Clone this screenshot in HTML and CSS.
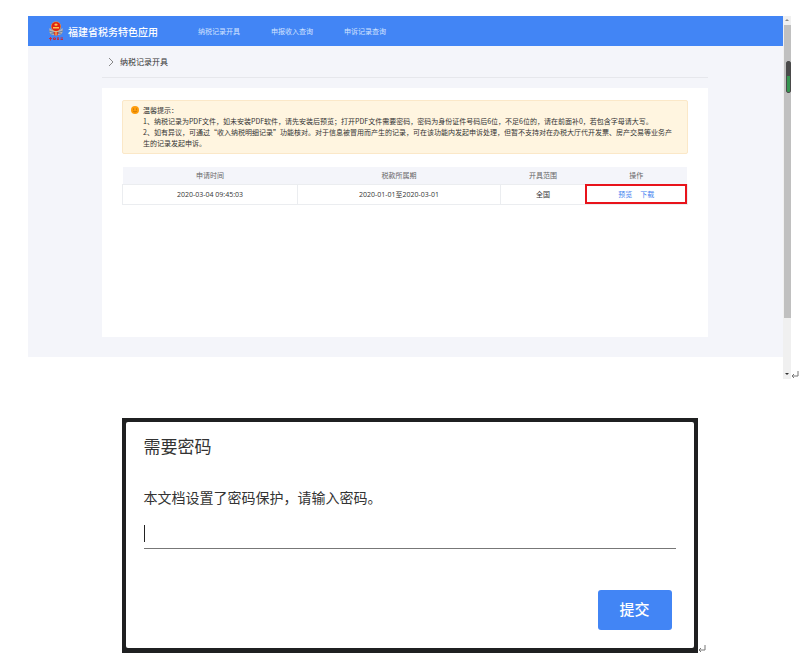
FILE: index.html
```html
<!DOCTYPE html>
<html lang="zh-CN">
<head>
  <meta charset="UTF-8">
  <meta name="viewport" content="width=device-width, initial-scale=1.0">
  <title>福建省税务特色应用</title>
  <link rel="stylesheet" href="styles.css">
</head>
<body>
  <div class="screen">
    <div class="page">
      <header class="header">
        <svg class="logo" viewBox="0 0 32 40" aria-hidden="true">
          <path d="M3 14 Q1 26 9 28 L23 28 Q31 26 29 14 L24 18 L8 18 Z" fill="#b9b4b5"/>
          <path d="M2 20 L12 23 M30 20 L20 23 M5 26 L13 25 M27 26 L19 25" stroke="#66809f" stroke-width="2"/>
          <circle cx="16" cy="11" r="10" fill="#e8a04c"/>
          <circle cx="16" cy="11" r="9" fill="#dc2415"/>
          <path d="M16 3 L17 6 L20 6 L18 8 L19 10 L16 9 L13 10 L14 8 L12 6 L15 6 Z M10 12 H22 V15 H10 Z" fill="#ffc04d"/>
          <path d="M11 22 H21 L19 29 H13 Z" fill="#dc3a23"/>
          <path d="M16 20 V29" stroke="#ffd06a" stroke-width="2"/>
          <path d="M2 35 H8 M5 32 V39 M11 34 H15 V37 H11 Z M18 34 H22 M18 37 H22 M20 33 V38 M25 34 H30 M25 37 H30" fill="none" stroke="#c52b43" stroke-width="2"/>
        </svg>
        <div class="brand">福建省税务特色应用</div>
        <nav class="nav">
          <a href="#">纳税记录开具</a>
          <a href="#">申报收入查询</a>
          <a href="#">申诉记录查询</a>
        </nav>
      </header>
      <main class="main">
        <div class="breadcrumb">
          <svg class="chevron" viewBox="0 0 6 8" aria-hidden="true"><path d="M1 0 L5 4 L1 8" fill="none" stroke="#888" stroke-width="1"/></svg>
          纳税记录开具
        </div>
        <div class="card">
          <div class="notice">
            <svg class="smile" viewBox="0 0 16 16" aria-hidden="true">
              <circle cx="8" cy="8" r="8" fill="#ff9c0a"/>
              <circle cx="5" cy="6" r="1" fill="#9b5a00"/>
              <circle cx="11" cy="6" r="1" fill="#9b5a00"/>
              <path d="M4 10 Q8 14 12 10" fill="none" stroke="#9b5a00" stroke-width="1"/>
            </svg>
            <div class="notice-text">
              <div>温馨提示：</div>
              <div>1、纳税记录为PDF文件，如未安装PDF软件，请先安装后预览；打开PDF文件需要密码，密码为身份证件号码后6位，不足6位的，请在前面补0，若包含字母请大写。</div>
              <div>2、如有异议，可通过“收入纳税明细记录”功能核对。对于信息被冒用而产生的记录，可在该功能内发起申诉处理，但暂不支持对在办税大厅代开发票、房产交易等业务产生的记录发起申诉。</div>
            </div>
          </div>
          <table class="records">
            <thead>
              <tr>
                <th class="col-time">申请时间</th>
                <th class="col-period">税款所属期</th>
                <th class="col-range">开具范围</th>
                <th class="col-action">操作</th>
              </tr>
            </thead>
            <tbody>
              <tr>
                <td>2020-03-04 09:45:03</td>
                <td>2020-01-01至2020-03-01</td>
                <td>全国</td>
                <td class="actions"><a href="#">预览</a><a href="#">下载</a></td>
              </tr>
            </tbody>
          </table>
        </div>
      </main>
    </div>
    <div class="scrollbar">
      <div class="arrow up"></div>
      <div class="track"><div class="thumb"></div></div>
      <div class="arrow down"></div>
      <div class="meter"></div>
    </div>
    <svg class="return" viewBox="0 0 8 8" aria-hidden="true"><path d="M7 0 V5 H1 M3 3 L1 5 L3 7" fill="none" stroke="#777" stroke-width="1"/></svg>
  </div>

  <div class="dialog-frame">
    <form class="dialog">
      <div class="dialog-title">需要密码</div>
      <label class="dialog-text" for="password">本文档设置了密码保护，请输入密码。</label>
      <div class="field">
        <input type="password" id="password">
        <span class="caret"></span>
      </div>
      <button class="btn" type="button">提交</button>
    </form>
    <svg class="return" viewBox="0 0 8 8" aria-hidden="true"><path d="M7 0 V5 H1 M3 3 L1 5 L3 7" fill="none" stroke="#777" stroke-width="1"/></svg>
  </div>
</body>
</html>
```

FILE: styles.css
```css
* {
  box-sizing: border-box;
}
body {
  margin: 0;
  padding: 16px 14px 15px 28px;
  font-family: "Open Sans", "Noto Sans CJK SC", sans-serif;
  font-size: 7px;
  color: #333;
  background: #fff;
}
a {
  text-decoration: none;
}
.screen {
  position: relative;
  display: flex;
  min-height: 363px;
}
.page {
  flex: 1;
}
.header {
  display: flex;
  align-items: center;
  height: 30px;
  padding-left: 20px;
  background: #4285f5;
}
.logo {
  width: 16px;
  height: 20px;
  margin-right: 4px;
}
.brand {
  margin-right: 40px;
  font-size: 10px;
  font-weight: 500;
  color: #fff;
}
.nav {
  display: flex;
  gap: 31px;
}
.nav a {
  color: #d3e3ff;
}
.main {
  padding: 0 10% 20px 74px;
  background: #f4f5fa;
}
.breadcrumb {
  display: flex;
  align-items: center;
  gap: 6px;
  height: 32px;
  margin-bottom: 10px;
  padding-left: 6px;
  border-bottom: 1px solid #e6e7ec;
  font-size: 8px;
}
.chevron {
  width: 6px;
  height: 8px;
}
.card {
  min-height: 249px;
  padding: 12px 20px;
  background: #fff;
}
.notice {
  display: flex;
  gap: 4px;
  margin-bottom: 13px;
  padding: 4px 8px;
  border: 1px solid #fbe8c8;
  border-radius: 2px;
  background: #fff5e0;
  line-height: 11px;
}
.notice-text {
  font-family: "Noto Sans CJK SC", sans-serif;
}
.smile {
  flex: none;
  width: 8px;
  height: 8px;
  margin-top: 1px;
}
.records {
  width: 100%;
  border-collapse: collapse;
  table-layout: fixed;
  text-align: center;
}
.records th {
  height: 17px;
  padding: 0;
  background: #f4f5fa;
  font-weight: normal;
  color: #666;
}
.records td {
  height: 20px;
  padding: 0;
  border: 1px solid #ebedf0;
}
.col-time {
  width: 31%;
}
.col-period {
  width: 36%;
}
.col-range {
  width: 15%;
}
.col-action {
  width: 18%;
}
.records .actions {
  outline: 2px solid #e8131b;
  outline-offset: -2px;
}
.actions a {
  margin: 0 4px;
  color: #3f7ff0;
}
.scrollbar {
  position: relative;
  display: flex;
  flex-direction: column;
  width: 8px;
  background: #f0f0f0;
}
.arrow {
  height: 9px;
}
.arrow::before {
  content: "";
  display: block;
  width: 0;
  margin: 3px auto;
  border: 2px solid transparent;
}
.up::before {
  border-top: 0;
  border-bottom-color: #888;
}
.down::before {
  border-bottom: 0;
  border-top-color: #333;
}
.track {
  flex: 1;
}
.thumb {
  height: 85%;
  margin-left: 1px;
  background: #c0c0c0;
}
.meter {
  position: absolute;
  top: 45px;
  right: 0;
  width: 5px;
  height: 32px;
  border: 1px solid #4a4a4a;
  border-radius: 2px;
  background: linear-gradient(#4a4a4a 45%, #359550 45%);
}
.return {
  position: absolute;
  bottom: 0;
  left: 100%;
  width: 8px;
  height: 8px;
}
.dialog-frame {
  position: relative;
  max-width: 576px;
  margin: 39px auto 0;
  padding: 4px 4px 5px;
  background: #1f2021;
}
.dialog {
  display: flex;
  flex-direction: column;
  padding: 13px 18px 18px;
  border-radius: 2px;
  background: #fff;
}
.dialog-title {
  margin-bottom: 28px;
  font-size: 17px;
  line-height: 24px;
}
.dialog-text {
  margin-bottom: 12px;
  font-size: 14px;
  line-height: 22px;
}
.field {
  position: relative;
}
.field input {
  display: block;
  width: 100%;
  height: 28px;
  padding: 0;
  border: none;
  border-bottom: 1px solid #777;
  outline: none;
  font-size: 14px;
  background: transparent;
}
.caret {
  position: absolute;
  top: 4px;
  left: 0;
  width: 1px;
  height: 17px;
  background: #222;
}
.btn {
  align-self: flex-end;
  width: 74px;
  height: 40px;
  margin: 41px 4px 0 0;
  padding: 0 0 4px;
  border: none;
  border-radius: 3px;
  font-family: inherit;
  font-size: 15px;
  font-weight: 500;
  color: #fff;
  background: #4285f5;
  cursor: pointer;
}
```
